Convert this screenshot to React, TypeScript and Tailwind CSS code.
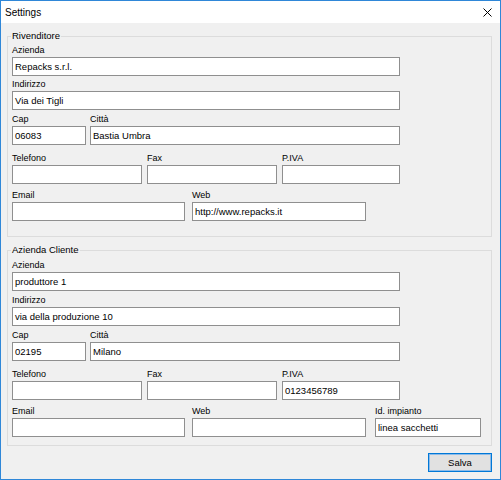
import React from "react";

const font = { fontFamily: '"Liberation Sans", Arial, sans-serif' };

function Field({
  label,
  value,
  w,
  ml,
}: {
  label: string;
  value?: string;
  w: string;
  ml?: string;
}) {
  return (
    <div className={`flex flex-col ${w} ${ml ?? ""}`}>
      <div className="h-[14px] text-[9px] leading-[14px] text-black whitespace-nowrap">{label}</div>
      <div className="h-[19px] border border-[#8f8f8f] bg-white pl-[2px] flex items-center text-[9.5px] leading-none text-black whitespace-nowrap overflow-hidden">
        {value ?? ""}
      </div>
    </div>
  );
}

function Group({
  title,
  children,
  className,
}: {
  title: string;
  children: React.ReactNode;
  className?: string;
}) {
  return (
    <div className={`relative border border-[#dcdcdc] pl-[4px] ${className ?? ""}`}>
      <span className="absolute left-[3px] top-[-8px] bg-[#f0f0f0] px-[1px] text-[9.5px] leading-[14px] text-black">
        {title}
      </span>
      {children}
    </div>
  );
}

export default function App() {
  return (
    <div
      className="w-[501px] h-[480px] border border-[#2f87d8] bg-[#f0f0f0] flex flex-col overflow-hidden"
      style={font}
    >
      <div className="h-[22px] bg-white flex items-center justify-between pl-[4px] pr-[8px] shrink-0">
        <span className="text-[10px] text-black">Settings</span>
        <svg width="9" height="9" viewBox="0 0 9 9" className="mt-[1px]">
          <path d="M0.5 0.5 L8.5 8.5 M8.5 0.5 L0.5 8.5" stroke="#000" strokeWidth="1" />
        </svg>
      </div>
      <div className="flex flex-col pl-[6px] w-[491px]">
        <Group title="Rivenditore" className="mt-[13px] pt-[6px] pb-[15px]">
          <Field label="Azienda" value="Repacks s.r.l." w="w-[388px]" />
          <div className="mt-[1px]">
            <Field label="Indirizzo" value="Via dei Tigli" w="w-[388px]" />
          </div>
          <div className="mt-[2px] flex">
            <Field label="Cap" value="06083" w="w-[74px]" />
            <Field label="Città" value="Bastia Umbra" w="w-[310px]" ml="ml-[4px]" />
          </div>
          <div className="mt-[6px] flex">
            <Field label="Telefono" w="w-[130px]" />
            <Field label="Fax" w="w-[130px]" ml="ml-[5px]" />
            <Field label="P.IVA" w="w-[118px]" ml="ml-[5px]" />
          </div>
          <div className="mt-[4px] flex">
            <Field label="Email" w="w-[173px]" />
            <Field label="Web" value="http://www.repacks.it" w="w-[174px]" ml="ml-[7px]" />
          </div>
        </Group>
        <Group title="Azienda Cliente" className="mt-[13px] pt-[7px] pb-[8px]">
          <Field label="Azienda" value="produttore 1" w="w-[388px]" />
          <div className="mt-[2px]">
            <Field label="Indirizzo" value="via della produzione 10" w="w-[388px]" />
          </div>
          <div className="mt-[2px] flex">
            <Field label="Cap" value="02195" w="w-[74px]" />
            <Field label="Città" value="Milano" w="w-[310px]" ml="ml-[4px]" />
          </div>
          <div className="mt-[6px] flex">
            <Field label="Telefono" w="w-[130px]" />
            <Field label="Fax" w="w-[130px]" ml="ml-[5px]" />
            <Field label="P.IVA" value="0123456789" w="w-[118px]" ml="ml-[5px]" />
          </div>
          <div className="mt-[4px] flex">
            <Field label="Email" w="w-[173px]" />
            <Field label="Web" w="w-[174px]" ml="ml-[7px]" />
            <Field label="Id. impianto" value="linea sacchetti" w="w-[106px]" ml="ml-[9px]" />
          </div>
        </Group>
        <div className="mt-[7px] flex justify-end">
          <button className="w-[64px] h-[19px] border border-[#0078d7] bg-[#e1e1e1] shadow-[inset_0_0_0_1px_#8dbbe8] text-[9.5px] leading-none text-black flex items-center justify-center">
            Salva
          </button>
        </div>
      </div>
    </div>
  );
}
